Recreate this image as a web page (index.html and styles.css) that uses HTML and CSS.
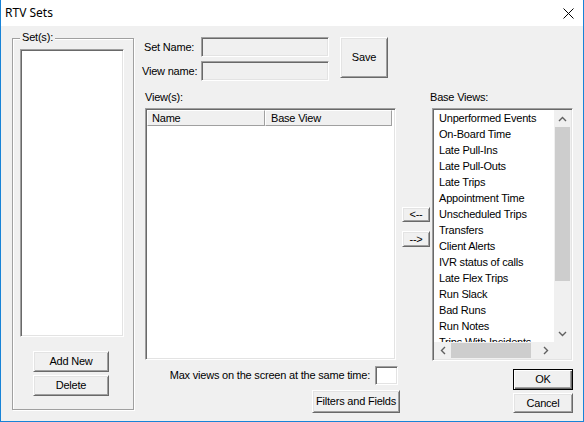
FILE: index.html
```html
<!DOCTYPE html>
<html>
<head>
<meta charset="utf-8">
<title>RTV Sets</title>
<link rel="stylesheet" href="styles.css">
</head>
<body>
<div class="window">
  <div class="titlebar">
    <span class="title">RTV Sets</span>
    <svg class="close" width="11" height="11" viewBox="0 0 11 11"><path d="M0.5 0.5 L10.5 10.5 M10.5 0.5 L0.5 10.5" stroke="#000" stroke-width="1" fill="none"/></svg>
  </div>
  <div class="client">
    <div class="group">
      <div class="legend">Set(s):</div>
      <div class="sunken listbox sets"></div>
      <button class="btn addnew">Add New</button>
      <button class="btn delete">Delete</button>
    </div>

    <div class="middle">
      <div class="names">
        <div class="fields">
          <span class="lbl lbl-set">Set Name:</span>
          <div class="sunken field"></div>
          <span class="lbl">View name:</span>
          <div class="sunken field"></div>
        </div>
        <button class="btn save">Save</button>
      </div>
      <div class="caption views-cap">View(s):</div>
      <div class="sunken listview">
        <div class="lv-header">
          <div class="col c1">Name</div>
          <div class="col c2">Base View</div>
        </div>
      </div>
      <div class="maxrow">
        <span>Max views on the screen at the same time:</span>
        <div class="sunken maxfield"></div>
      </div>
      <div class="filters-row">
        <button class="btn filters">Filters and Fields</button>
      </div>
    </div>

    <div class="arrows">
      <button class="btn arrow left">&lt;--</button>
      <button class="btn arrow right">--&gt;</button>
    </div>

    <div class="rightcol">
      <div class="caption base-cap">Base Views:</div>
      <div class="sunken baselist">
        <div class="lb-top">
          <div class="items">
            <div class="item">Unperformed Events</div>
            <div class="item">On-Board Time</div>
            <div class="item">Late Pull-Ins</div>
            <div class="item">Late Pull-Outs</div>
            <div class="item">Late Trips</div>
            <div class="item">Appointment Time</div>
            <div class="item">Unscheduled Trips</div>
            <div class="item">Transfers</div>
            <div class="item">Client Alerts</div>
            <div class="item">IVR status of calls</div>
            <div class="item">Late Flex Trips</div>
            <div class="item">Run Slack</div>
            <div class="item">Bad Runs</div>
            <div class="item">Run Notes</div>
            <div class="item">Trips With Incidents</div>
          </div>
          <div class="vscroll">
            <div class="sb-btn"><svg width="9" height="6" viewBox="0 0 9 6"><path d="M1 5 L4.5 1.5 L8 5" stroke="#606060" stroke-width="1.4" fill="none"/></svg></div>
            <div class="vthumb"></div>
            <div class="sb-track"></div>
            <div class="sb-btn"><svg width="9" height="6" viewBox="0 0 9 6"><path d="M1 1 L4.5 4.5 L8 1" stroke="#606060" stroke-width="1.4" fill="none"/></svg></div>
          </div>
        </div>
        <div class="hscroll">
          <div class="sb-btn"><svg width="6" height="9" viewBox="0 0 6 9"><path d="M5 1 L1.5 4.5 L5 8" stroke="#606060" stroke-width="1.4" fill="none"/></svg></div>
          <div class="hthumb"></div>
          <div class="sb-track"></div>
          <div class="sb-btn"><svg width="6" height="9" viewBox="0 0 6 9"><path d="M1 1 L4.5 4.5 L1 8" stroke="#606060" stroke-width="1.4" fill="none"/></svg></div>
          <div class="corner"></div>
        </div>
      </div>
      <button class="btn ok">OK</button>
      <button class="btn cancel">Cancel</button>
    </div>
  </div>
</div>
</body>
</html>
```

FILE: styles.css
```css
* { box-sizing: border-box; }

body {
  margin: 0;
  font-family: "Liberation Sans", Arial, sans-serif;
  font-size: 11px;
  letter-spacing: -0.2px;
  color: #000;
  background: #fff;
}

.window {
  width: 584px;
  height: 422px;
  border: 1px solid #1883d7;
  border-top: none;
  display: flex;
  flex-direction: column;
  background: #f0f0f0;
}

.titlebar {
  height: 26px;
  flex: 0 0 26px;
  background: #fff;
  display: flex;
  align-items: flex-start;
  justify-content: space-between;
  padding: 0 9px 0 4px;
}

.title {
  font-family: "Noto Sans", "Open Sans", sans-serif;
  font-size: 12px;
  letter-spacing: 0;
  line-height: 26px;
}

.close {
  margin-top: 8px;
  display: block;
}

.client {
  flex: 1;
  display: flex;
  align-items: flex-start;
  padding: 11px 0 0 11px;
}

/* 3D borders */
.sunken {
  border: 1px solid;
  border-color: #a0a0a0 #fff #fff #a0a0a0;
  box-shadow: inset 1px 1px 0 #696969, inset -1px -1px 0 #e3e3e3;
  background: #fff;
}

.btn {
  font: inherit;
  letter-spacing: inherit;
  color: #000;
  padding: 0;
  margin: 0;
  background: #f0f0f0;
  border: 1px solid;
  border-color: #fff #696969 #696969 #fff;
  box-shadow: inset 1px 1px 0 #e3e3e3, inset -1px -1px 0 #a0a0a0;
  display: flex;
  align-items: center;
  justify-content: center;
  line-height: 13px;
}

/* left group */
.group {
  margin-top: 1px;
  width: 122px;
  height: 372px;
  flex: 0 0 122px;
  border: 1px solid #a0a0a0;
  box-shadow: inset 1px 1px 0 #fff, 1px 1px 0 #fff;
  display: flex;
  flex-direction: column;
  align-items: flex-start;
}

.legend {
  margin: -8px 0 0 7px;
  padding: 0 2px;
  line-height: 13px;
  background: #f0f0f0;
}

.sets {
  margin: 5px 0 0 7px;
  width: 104px;
  height: 288px;
}

.addnew {
  margin: 14px 0 0 20px;
  width: 76px;
  height: 21px;
}

.delete {
  margin: 3px 0 0 20px;
  width: 76px;
  height: 21px;
}

/* middle */
.middle {
  margin-left: 8px;
  width: 258px;
  flex: 0 0 258px;
  display: flex;
  flex-direction: column;
}

.names {
  display: flex;
  align-items: flex-start;
  height: 44px;
}

.fields {
  display: grid;
  grid-template-columns: 59px 128px;
  grid-template-rows: 20px 20px;
  row-gap: 4px;
  align-items: center;
}

.lbl {
  line-height: 13px;
  padding-top: 1px;
}

.lbl-set { padding-left: 2px; }

.field {
  height: 20px;
  background: #f0f0f0;
}

.save {
  margin-left: 11px;
  width: 48px;
  height: 41px;
}

.caption {
  line-height: 13px;
}

.views-cap {
  margin: 10px 0 0 3px;
}

.listview {
  margin: 4px 0 0 3px;
  width: 251px;
  height: 252px;
  padding: 1px;
}

.lv-header {
  display: flex;
  height: 16px;
}

.col {
  height: 16px;
  line-height: 14px;
  background: #f0f0f0;
  border: 1px solid;
  border-color: #fff #a0a0a0 #a0a0a0 #fff;
}

.c1 { width: 118px; padding-left: 4px; }
.c2 { width: 127px; padding-left: 5px; }

.maxrow {
  margin-top: 6px;
  display: flex;
  justify-content: flex-end;
  align-items: center;
  gap: 5px;
  padding-right: 2px;
  line-height: 13px;
}

.maxfield {
  width: 23px;
  height: 19px;
}

.filters-row {
  margin-top: 5px;
  display: flex;
  justify-content: flex-end;
}

.filters {
  width: 88px;
  height: 23px;
}

/* arrows */
.arrows {
  margin-left: 2px;
  width: 28px;
  flex: 0 0 28px;
  display: flex;
  flex-direction: column;
}

.arrow { width: 28px; }
.arrow.left { margin-top: 170px; height: 15px; }
.arrow.right { margin-top: 9px; height: 16px; }

/* right column */
.rightcol {
  margin-left: 2px;
  width: 141px;
  flex: 0 0 141px;
  display: flex;
  flex-direction: column;
}

.base-cap {
  margin: 54px 0 0 -2px;
}

.baselist {
  margin-top: 4px;
  height: 253px;
  padding: 1px;
  display: flex;
  flex-direction: column;
}

.lb-top {
  display: flex;
  height: 232px;
}

.items {
  flex: 1;
  overflow: hidden;
  padding-left: 5px;
  background: #fff;
}

.item {
  line-height: 16px;
  height: 16px;
  white-space: nowrap;
}

.vscroll {
  width: 17px;
  flex: 0 0 17px;
  display: flex;
  flex-direction: column;
  background: #f0f0f0;
}

.sb-btn {
  flex: 0 0 17px;
  width: 17px;
  height: 17px;
  display: flex;
  align-items: center;
  justify-content: center;
  background: #f0f0f0;
}

.vthumb {
  height: 154px;
  flex: 0 0 154px;
  margin: 0 1px;
  background: #cdcdcd;
}

.sb-track {
  flex: 1;
  background: #f0f0f0;
}

.hscroll {
  display: flex;
  height: 17px;
  flex: 0 0 17px;
  background: #f0f0f0;
}

.hthumb {
  width: 80px;
  flex: 0 0 80px;
  margin: 1px 0;
  background: #cdcdcd;
}

.corner {
  width: 17px;
  flex: 0 0 17px;
  background: #f0f0f0;
}

.ok {
  margin-top: 8px;
  align-self: flex-end;
  width: 60px;
  height: 21px;
  outline: 1px solid #000;
  outline-offset: -1px;
  border-color: #000;
  box-shadow: inset 1px 1px 0 #fff, inset -1px -1px 0 #696969, inset -2px -2px 0 #a0a0a0;
}

.cancel {
  margin-top: 3px;
  align-self: flex-end;
  width: 60px;
  height: 20px;
}
```
